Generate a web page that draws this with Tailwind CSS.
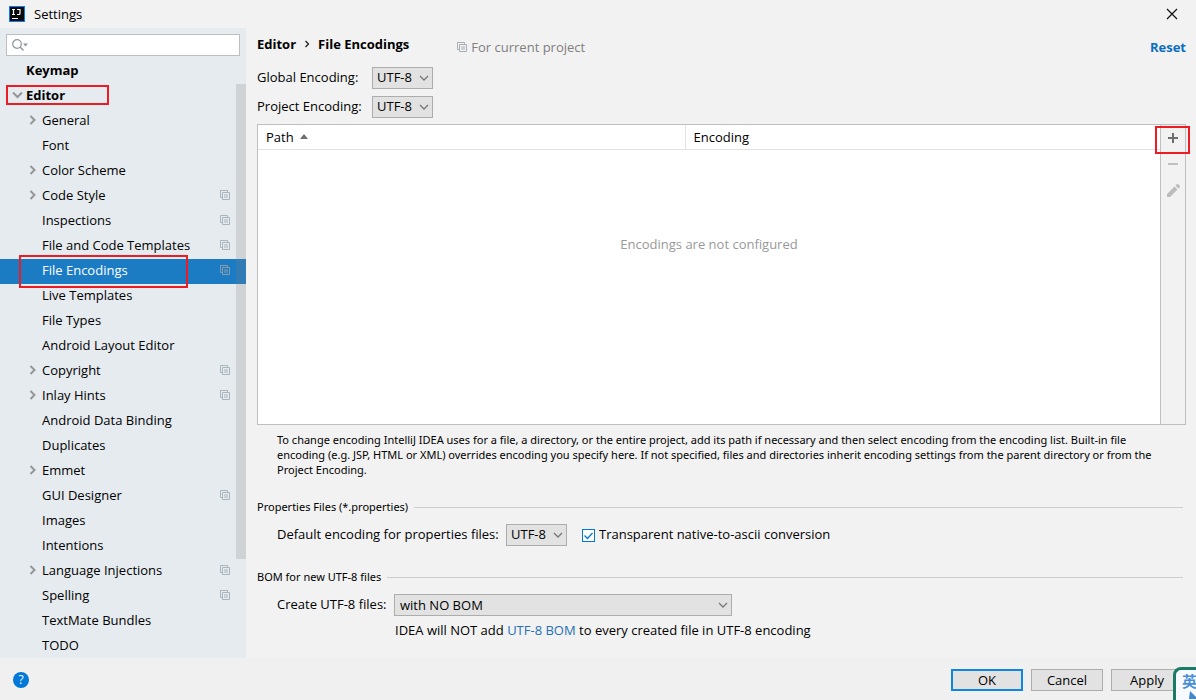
<!DOCTYPE html>
<html lang="en">
<head>
    <meta charset="UTF-8">
    <meta name="viewport" content="width=device-width, initial-scale=1.0">
    <title>Settings</title>
    <script src="https://cdn.jsdelivr.net/npm/@tailwindcss/browser@4"></script>
</head>
<body class="relative flex flex-col h-screen overflow-hidden bg-[#f2f2f2] text-black text-[13px] leading-4 font-['Open_Sans','Noto_Sans_CJK_SC',sans-serif]">
    <!-- Shared icons -->
    <svg class="hidden">
        <symbol id="copy" viewBox="0 0 10 10"><path d="M2 7.500H.5v-7h7V2M2.500 2.500h7v7h-7zM4 5h4M4 7h4" fill="none" stroke="currentColor"/></symbol>
        <symbol id="right" viewBox="0 0 8 10"><path d="M1.500 1l4 4-4 4" fill="none" stroke="#949698" stroke-width="2"/></symbol>
        <symbol id="down" viewBox="0 0 10 6"><path d="M1 1l4 4 4-4" fill="none" stroke="currentColor" stroke-width="1.300"/></symbol>
    </svg>

    <!-- Title bar -->
    <header class="flex items-center h-7 shrink-0 pl-[9px] pr-[18px]">
        <svg class="w-4 h-4" viewBox="0 0 16 16">
            <rect width="16" height="16" fill="#087cfa"/>
            <rect x="1" y="1" width="14" height="14" fill="#0a0a0a"/>
            <path d="M3 3.500h3M4.500 3.500v5M3 8.500h3M8 3.500h3v4q0 1-1 1H8M3 12.500h6" fill="none" stroke="#fff" stroke-width="1.200"/>
        </svg>
        <h1 class="ml-[9px] grow">Settings</h1>
        <button aria-label="Close"><svg class="w-3 h-3" viewBox="0 0 12 12"><path d="M1 1l10 10M11 1L1 11" stroke="#111" stroke-width="1.200"/></svg></button>
    </header>

    <div class="flex grow min-h-0">
        <!-- Sidebar -->
        <nav class="relative flex flex-col w-[246px] shrink-0 bg-[#e6ebef] pt-1.5">
            <div class="flex items-center mx-1.5 h-[22px] shrink-0 bg-white border border-[#bdbfc1]">
                <svg class="w-[18px] h-3 ml-[5px] shrink-0" viewBox="0 0 18 12">
                    <circle cx="5" cy="5" r="4.300" fill="none" stroke="#8e979e" stroke-width="1.200"/>
                    <path d="M8 8l3.500 3.500" stroke="#8e979e" stroke-width="1.400"/>
                    <path d="M11 4.500h5L13.500 7.500z" fill="#8e979e"/>
                </svg>
                <input type="text" aria-label="Search settings" class="grow min-w-0 outline-none">
            </div>
            <ul class="mt-[3px] min-h-0 overflow-hidden *:flex *:items-center *:h-[25px] *:pb-[3px] *:pl-[42px] *:pr-4">
                <li class="pl-[26px]! font-bold">Keymap</li>
                <li class="pl-3! font-bold"><svg class="w-[11px] h-2 mr-[3px]" viewBox="0 0 11 8"><path d="M1 1.500l4.500 4.500L10 1.500" fill="none" stroke="#949698" stroke-width="2"/></svg>Editor</li>
                <li class="pl-[29px]!"><svg class="w-2 h-2.5 mr-[5px]"><use href="#right"/></svg>General</li>
                <li>Font</li>
                <li class="pl-[29px]!"><svg class="w-2 h-2.5 mr-[5px]"><use href="#right"/></svg>Color Scheme</li>
                <li class="pl-[29px]!"><svg class="w-2 h-2.5 mr-[5px]"><use href="#right"/></svg>Code Style<svg class="w-2.5 h-2.5 ml-auto text-[#a9b5bd]"><use href="#copy"/></svg></li>
                <li>Inspections<svg class="w-2.5 h-2.5 ml-auto text-[#a9b5bd]"><use href="#copy"/></svg></li>
                <li>File and Code Templates<svg class="w-2.5 h-2.5 ml-auto text-[#a9b5bd]"><use href="#copy"/></svg></li>
                <li class="bg-[#1b7cc4] text-white">File Encodings<svg class="w-2.5 h-2.5 ml-auto text-[#8a9cab]"><use href="#copy"/></svg></li>
                <li>Live Templates</li>
                <li>File Types</li>
                <li>Android Layout Editor</li>
                <li class="pl-[29px]!"><svg class="w-2 h-2.5 mr-[5px]"><use href="#right"/></svg>Copyright<svg class="w-2.5 h-2.5 ml-auto text-[#a9b5bd]"><use href="#copy"/></svg></li>
                <li class="pl-[29px]!"><svg class="w-2 h-2.5 mr-[5px]"><use href="#right"/></svg>Inlay Hints<svg class="w-2.5 h-2.5 ml-auto text-[#a9b5bd]"><use href="#copy"/></svg></li>
                <li>Android Data Binding</li>
                <li>Duplicates</li>
                <li class="pl-[29px]!"><svg class="w-2 h-2.5 mr-[5px]"><use href="#right"/></svg>Emmet</li>
                <li>GUI Designer<svg class="w-2.5 h-2.5 ml-auto text-[#a9b5bd]"><use href="#copy"/></svg></li>
                <li>Images</li>
                <li>Intentions</li>
                <li class="pl-[29px]!"><svg class="w-2 h-2.5 mr-[5px]"><use href="#right"/></svg>Language Injections<svg class="w-2.5 h-2.5 ml-auto text-[#a9b5bd]"><use href="#copy"/></svg></li>
                <li>Spelling<svg class="w-2.5 h-2.5 ml-auto text-[#a9b5bd]"><use href="#copy"/></svg></li>
                <li>TextMate Bundles</li>
                <li>TODO</li>
            </ul>
            <!-- Scrollbar thumb -->
            <div class="absolute right-0 top-14 w-2.5 h-[475px] bg-[#808080]/22"></div>
            <!-- Highlights -->
            <div class="absolute left-1.5 top-[57px] w-[103px] h-5 border-2 border-[#ed1c24]"></div>
            <div class="absolute left-[19px] top-[227px] w-[169px] h-[33px] border-2 border-[#ed1c24]"></div>
        </nav>

        <!-- Content -->
        <main class="flex flex-col grow min-w-0 pl-[11px] pr-2.5 pb-5">
            <div class="flex items-center h-8 shrink-0">
                <h2 class="flex items-center font-bold">Editor<svg class="w-1.5 h-2 mx-2" viewBox="0 0 6 8"><path d="M1.500 1l3 3-3 3" fill="none" stroke="#222" stroke-width="1.300"/></svg>File Encodings</h2>
                <span class="flex items-center gap-1 ml-12 pt-1.5 text-[#7f7f7f]"><svg class="w-2.5 h-2.5 text-[#a9b0b5]"><use href="#copy"/></svg>For current project</span>
                <a href="#" class="ml-auto pt-1.5 font-bold text-[#0a6fc2]">Reset</a>
            </div>

            <div class="grid grid-cols-[115px_61px] gap-y-[7px] items-center mt-[7px] shrink-0">
                <label for="global" class="pb-0.5">Global Encoding:</label>
                <div class="relative">
                    <select id="global" class="block appearance-none w-full h-[22px] pb-0.5 pl-1 bg-[#e2e2e2] border border-[#adadad]"><option>UTF-8</option></select>
                    <svg class="absolute right-1 top-2 w-2.5 h-1.5 text-[#777] pointer-events-none"><use href="#down"/></svg>
                </div>
                <label for="project" class="pb-0.5">Project Encoding:</label>
                <div class="relative">
                    <select id="project" class="block appearance-none w-full h-[22px] pb-0.5 pl-1 bg-[#e2e2e2] border border-[#adadad]"><option>UTF-8</option></select>
                    <svg class="absolute right-1 top-2 w-2.5 h-1.5 text-[#777] pointer-events-none"><use href="#down"/></svg>
                </div>
            </div>

            <div class="flex grow min-h-0 mt-1.5 border border-[#bfbfbf]">
                <div class="flex flex-col grow bg-white">
                    <table class="w-full table-fixed">
                        <thead>
                            <tr class="h-6 border-b border-[#e3e3e3] text-left">
                                <th class="w-[427px] pl-2 font-normal border-r border-[#e3e3e3]">
                                    <span class="flex items-center gap-1.5">Path<svg class="w-2 h-[5px]" viewBox="0 0 8 5"><path d="M0 5l4-5 4 5z" fill="#6e6e6e"/></svg></span>
                                </th>
                                <th class="pl-2 font-normal">Encoding</th>
                            </tr>
                        </thead>
                    </table>
                    <p class="mt-[86px] text-center text-[#999]">Encodings are not configured</p>
                </div>
                <div class="relative flex flex-col items-center w-[25px] shrink-0 border-l border-[#bfbfbf]">
                    <button aria-label="Add" class="flex items-center h-[26px]"><svg class="w-2.5 h-2.5" viewBox="0 0 10 10"><path d="M5 0v10M0 5h10" stroke="#6e6e6e" stroke-width="2"/></svg></button>
                    <button aria-label="Remove" class="flex items-center h-[26px]"><svg class="w-2.5 h-2.5" viewBox="0 0 10 10"><path d="M0 5h10" stroke="#c0c0c0" stroke-width="2"/></svg></button>
                    <button aria-label="Edit" class="flex items-center h-[26px]"><svg class="w-[13px] h-[13px]" viewBox="0 0 13 13"><path d="M0 13v-3l7.500-7.500 3 3L3 13zM8.500 1.500L10 0h1l2 2v1l-1.500 1.500z" fill="#bcbcbc"/></svg></button>
                    <div class="absolute -left-1.5 top-px w-[35px] h-7 border-2 border-[#ed1c24]"></div>
                </div>
            </div>

            <p class="mt-[7px] ml-5 pr-5 shrink-0 font-['Noto_Sans',sans-serif] text-[11px] leading-[15px]">To change encoding IntelliJ IDEA uses for a file, a directory, or the entire project, add its path if necessary and then select encoding from the encoding list. Built-in file encoding (e.g. JSP, HTML or XML) overrides encoding you specify here. If not specified, files and directories inherit encoding settings from the parent directory or from the Project Encoding.</p>

            <h3 class="flex items-center gap-1.5 mt-[22px] pr-[3px] shrink-0 font-['Noto_Sans',sans-serif] text-[11px] leading-4">Properties Files (*.properties)<span class="grow h-px bg-[#cdcdcd]"></span></h3>
            <div class="flex items-center mt-[9px] ml-5 shrink-0">
                <label for="properties" class="w-[229px] pb-0.5">Default encoding for properties files:</label>
                <div class="relative w-[61px]">
                    <select id="properties" class="block appearance-none w-full h-[22px] pb-0.5 pl-1 bg-[#e2e2e2] border border-[#adadad]"><option>UTF-8</option></select>
                    <svg class="absolute right-1 top-2 w-2.5 h-1.5 text-[#777] pointer-events-none"><use href="#down"/></svg>
                </div>
                <div class="relative ml-[15px] w-[13px] h-[13px]">
                    <input id="ascii" type="checkbox" checked class="peer block appearance-none w-[13px] h-[13px] bg-white border border-[#0078d7]">
                    <svg class="absolute inset-0 hidden peer-checked:block pointer-events-none" viewBox="0 0 13 13"><path d="M2.500 6.500l3 3 5-5.500" fill="none" stroke="#0078d7" stroke-width="1.300"/></svg>
                </div>
                <label for="ascii" class="ml-1 pb-0.5">Transparent native-to-ascii conversion</label>
            </div>

            <h3 class="flex items-center gap-1.5 mt-[23px] pr-[3px] shrink-0 font-['Noto_Sans',sans-serif] text-[11px] leading-4">BOM for new UTF-8 files<span class="grow h-px bg-[#cdcdcd]"></span></h3>
            <div class="flex items-center mt-[9px] ml-5 shrink-0">
                <label for="bom" class="w-[117px] pb-0.5">Create UTF-8 files:</label>
                <div class="relative w-[338px]">
                    <select id="bom" class="block appearance-none w-full h-[22px] pl-[5px] bg-[#e2e2e2] border border-[#adadad]"><option>with NO BOM</option></select>
                    <svg class="absolute right-1 top-2 w-2.5 h-1.5 text-[#777] pointer-events-none"><use href="#down"/></svg>
                </div>
            </div>
            <p class="mt-1.5 ml-[138px] shrink-0">IDEA will NOT add <a href="#" class="text-[#2470b3]">UTF-8 BOM</a> to every created file in UTF-8 encoding</p>
        </main>
    </div>

    <!-- Buttons -->
    <footer class="flex items-center gap-2 h-[42px] shrink-0 pt-0.5 px-[13px] bg-[#f0f0f0]">
        <button aria-label="Help" class="w-4 h-4 mr-auto rounded-full bg-[#0078d7] text-white text-xs leading-4">?</button>
        <button class="w-[72px] h-[22px] bg-[#e2e2e2] border-2 border-[#0f86df]">OK</button>
        <button class="w-[72px] h-[22px] bg-[#e2e2e2] border border-[#adadad]">Cancel</button>
        <button class="w-[72px] h-[22px] bg-[#e2e2e2] border border-[#adadad]">Apply</button>
    </footer>

    <!-- Input method badge -->
    <div class="absolute right-0 bottom-0 w-[23px] h-[33px] overflow-hidden border-t-3 border-l-3 border-[#1b7a66] rounded-tl-lg bg-[#f7fbff] pl-1.5 pt-px text-[#4a8fd6] font-bold">
        <div class="w-4 text-[15px] leading-5">英</div>
        <svg class="w-3.5 h-2 ml-1" viewBox="0 0 14 8"><path d="M4 0l5 5 3 3H3z" fill="#3f86d0"/></svg>
    </div>
</body>
</html>
